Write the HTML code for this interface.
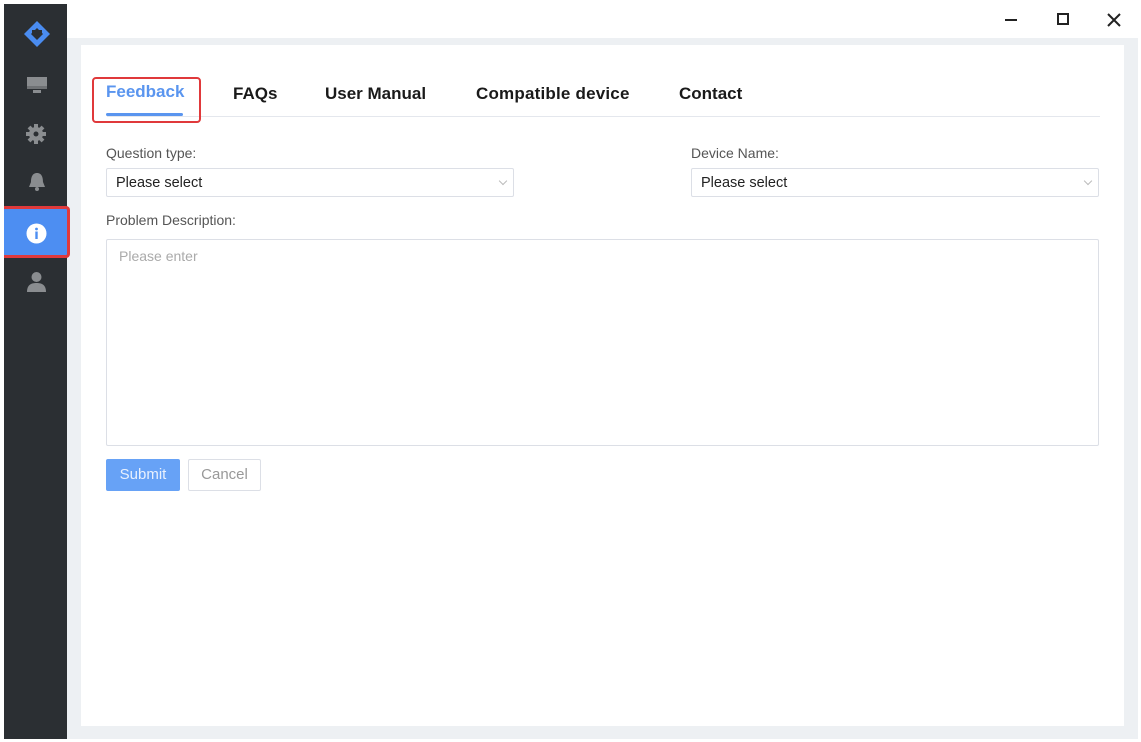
<!DOCTYPE html>
<html><head><meta charset="utf-8"><style>
*{margin:0;padding:0;box-sizing:border-box}
body{width:1141px;height:742px;background:#fff;position:relative;overflow:hidden;font-family:"Liberation Sans",sans-serif}
.abs{position:absolute}
#side{left:4px;top:4px;width:63px;height:735px;background:#2b2f33}
#main{left:67px;top:4px;width:1071px;height:735px;background:#edf0f3}
#top{left:67px;top:4px;width:1071px;height:34px;background:#fff}
#panel{left:81px;top:45px;width:1043px;height:681px;background:#fff}
.tab{position:absolute;top:84px;font-size:17px;font-weight:bold;color:#1a1a1a}
.lbl{position:absolute;font-size:14px;color:#555}
.sel{position:absolute;height:29px;border:1px solid #dcdfe6;border-radius:2px;font-size:14.5px;color:#222;padding:6px 9px}
.sel::after{content:"";position:absolute;right:7px;top:9px;width:5px;height:5px;border-right:1px solid #bbb;border-bottom:1px solid #bbb;transform:rotate(45deg)}
</style></head><body>
<div id="main" class="abs"></div>
<div id="top" class="abs"></div>
<div id="panel" class="abs"></div>
<div id="side" class="abs"></div>
<svg class="abs" style="left:22px;top:19px" width="30" height="30" viewBox="0 0 30 30"><path d="M15 2 L28 15 L15 28 L2 15 Z" fill="#4a8cf0"/><path d="M15 9 L21 15 L15 21 L9 15 Z" fill="#2b2f33"/><path d="M10 11 h10 v3 h-10z" fill="#2b2f33"/></svg>
<svg class="abs" style="left:27px;top:76px" width="20" height="20" viewBox="0 0 20 20"><rect x="0" y="1" width="20" height="12" fill="#8a8d90"/><rect x="0" y="10" width="20" height="3" fill="#6f7275"/><rect x="6" y="14" width="8" height="3" fill="#8a8d90"/></svg>
<svg class="abs" style="left:26px;top:124px" width="20" height="20" viewBox="0 0 20 20"><circle cx="10" cy="10" r="7" fill="#8a8d90"/><g stroke="#8a8d90" stroke-width="4"><line x1="10" y1="0" x2="10" y2="20"/><line x1="0" y1="10" x2="20" y2="10"/><line x1="3" y1="3" x2="17" y2="17"/><line x1="17" y1="3" x2="3" y2="17"/></g><circle cx="10" cy="10" r="2.5" fill="#2b2f33"/></svg>
<svg class="abs" style="left:28px;top:172px" width="18" height="20" viewBox="0 0 18 20"><path d="M9 1 C4 1 3 6 3 10 L1 15 H17 L15 10 C15 6 14 1 9 1Z" fill="#8a8d90"/><circle cx="9" cy="17" r="2" fill="#8a8d90"/></svg>
<div class="abs" style="left:4px;top:206px;width:66px;height:52px;background:#4d8ef2;border:3px solid #e0393b;border-left:none;border-radius:0 4px 4px 0"></div>
<svg class="abs" style="left:26px;top:223px" width="21" height="21" viewBox="0 0 21 21"><circle cx="10.5" cy="10.5" r="10" fill="#fff"/><rect x="9.3" y="8.5" width="2.4" height="7.5" fill="#4d8ef2"/><circle cx="10.5" cy="6" r="1.4" fill="#4d8ef2"/></svg>
<svg class="abs" style="left:26px;top:271px" width="21" height="22" viewBox="0 0 21 22"><circle cx="10.5" cy="6" r="5" fill="#8a8d90"/><path d="M1 21 C1 14 5 12 10.5 12 C16 12 20 14 20 21Z" fill="#8a8d90"/></svg>
<div class="abs" style="left:1005px;top:19px;width:12px;height:2px;background:#222"></div>
<div class="abs" style="left:1057px;top:13px;width:12px;height:12px;border:2px solid #222"></div>
<svg class="abs" style="left:1107px;top:13px" width="14" height="14" viewBox="0 0 14 14"><path d="M1 1 L13 13 M13 1 L1 13" stroke="#222" stroke-width="2"/></svg>
<div class="abs" style="left:107px;top:116px;width:993px;height:1px;background:#e4e7ed"></div>
<div class="tab" style="left:106px;top:82px;color:#5a95ef">Feedback</div>
<div class="abs" style="left:106px;top:113px;width:77px;height:3px;background:#5a95ef;border-radius:2px"></div>
<div class="abs" style="left:92px;top:77px;width:109px;height:46px;border:2px solid #e0393b;border-radius:4px"></div>
<div class="tab" style="left:233px">FAQs</div>
<div class="tab" style="left:325px">User Manual</div>
<div class="tab" style="left:476px;letter-spacing:0.2px">Compatible device</div>
<div class="tab" style="left:679px">Contact</div>
<div class="lbl" style="left:106px;top:145px">Question type:</div>
<div class="lbl" style="left:691px;top:145px">Device Name:</div>
<div class="sel" style="left:106px;top:168px;width:408px">Please select</div>
<div class="sel" style="left:691px;top:168px;width:408px">Please select</div>
<div class="lbl" style="left:106px;top:212px">Problem Description:</div>
<div class="abs" style="left:106px;top:239px;width:993px;height:207px;border:1px solid #dcdfe6;border-radius:2px;padding:8px 12px;font-size:14px;color:#aaa">Please enter</div>
<div class="abs" style="left:106px;top:459px;width:74px;height:32px;background:#67a2f6;border-radius:2px;color:#e9f1fe;font-size:15px;text-align:center;line-height:32px">Submit</div>
<div class="abs" style="left:188px;top:459px;width:73px;height:32px;border:1px solid #dcdfe6;border-radius:2px;color:#999;font-size:15px;text-align:center;line-height:30px">Cancel</div>
</body></html>
